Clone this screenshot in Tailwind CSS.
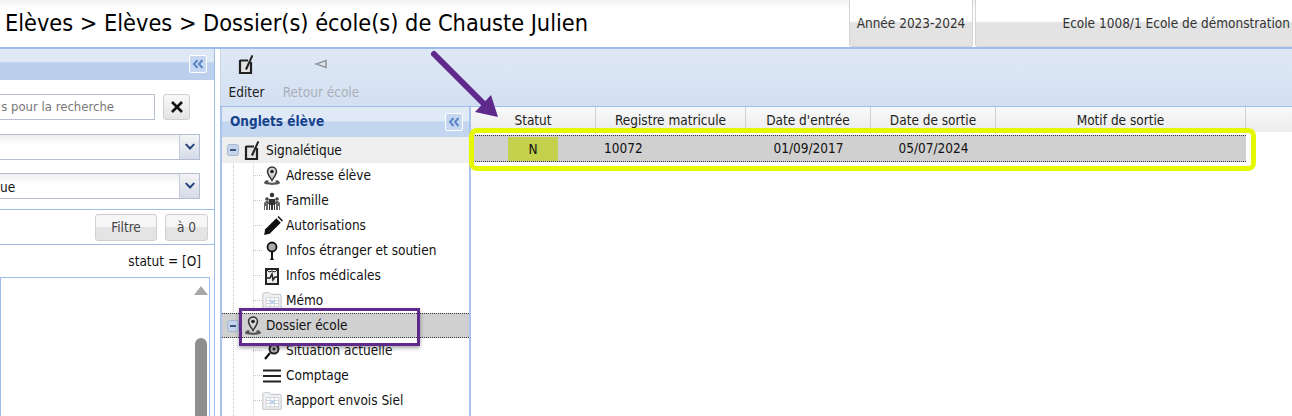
<!doctype html>
<html>
<head>
<meta charset="UTF-8">
<script src="https://cdn.jsdelivr.net/npm/@tailwindcss/browser@4"></script>
</head>
<body class="relative h-[416px] w-[1292px] overflow-hidden bg-white font-['DejaVu_Sans',sans-serif] text-[13.5px] text-[#111] [font-stretch:condensed]">
<svg class="hidden">
  <symbol id="pin" viewBox="0 0 18 20">
    <path d="M9 1a4.500 4.500 0 0 1 4.500 4.500c0 3-2.500 5.500-4.500 9-2-3.500-4.500-6-4.500-9A4.500 4.500 0 0 1 9 1z" fill="#d4d4d4" stroke="#333" stroke-width="1.500"/>
    <circle cx="9" cy="5.500" r="1.800" fill="#222"/>
    <path d="M4 14c-2 1-3 2-3 3 1 2.500 15 2.500 16 0 0-1-1-2-3-3l-2 1 1 1c-2 1-6 1-8 0l1-1z" fill="#555"/>
  </symbol>
  <symbol id="edit" viewBox="0 0 18 20">
    <path d="M2 6.500h8M2 6v13h11V8" fill="#e4e4e4" stroke="#222" stroke-width="2.200"/>
    <path d="M7 15l6.500-14 1.800 .8L9 16z" fill="#222"/>
  </symbol>
  <symbol id="sheet" viewBox="0 0 24 24">
    <path d="M1 4q0-2 2-2h6l2 2h10q2 0 2 2v16H1z" fill="#eef0f2" stroke="#bcbcbc"/>
    <path d="M5 8h15v11H5z" fill="#fff" stroke="#c9cdd2"/>
    <path d="M5 11.500h15M5 15h15M10 8v11M15 8v11" stroke="#c9cdd2"/>
    <path d="M10 11.500h5V15h-5z" fill="#bcd3f2"/>
  </symbol>
  <symbol id="chev" viewBox="0 0 12 10"><path d="M1 1.500l1.500-1L6 4l3.500-3.500 1.500 1L6 7z" fill="#1f3f7a" transform="translate(0 1)"/></symbol>
  <symbol id="dbl" viewBox="0 0 12 10"><path d="M5.500 1L2 5l3.500 4M10.500 1L7 5l3.500 4" fill="none" stroke="#5b86c4" stroke-width="2"/></symbol>
  <symbol id="minus" viewBox="0 0 12 12"><rect x=".5" y=".5" width="11" height="11" rx="2" fill="#c6d4ea" stroke="#a3b6d2"/><path d="M3 6h6" stroke="#3a5686" stroke-width="2"/></symbol>
</svg>

<!-- top bar -->
<header class="flex h-[47px] items-stretch justify-between bg-gradient-to-b from-[#f2f2f2] to-white to-20%">
  <h1 class="flex items-center pb-[1px] pl-[5px] text-[23.3px] whitespace-nowrap text-black">Elèves &gt; Elèves &gt; Dossier(s) école(s) de Chauste Julien</h1>
  <div class="flex gap-[2px]">
    <div class="flex w-[124px] items-center justify-center rounded-b-[3px] border-x border-b border-[#d4d4d4] bg-gradient-to-b from-white from-45% to-[#e3e3e3] to-50% text-[#333]">Année 2023-2024</div>
    <div class="flex w-[317px] items-center justify-end rounded-bl-[3px] border-b border-l border-[#d4d4d4] bg-gradient-to-b from-white from-45% to-[#e3e3e3] to-50% pr-[2px] text-[#333]">Ecole 1008/1 Ecole de démonstration</div>
  </div>
</header>
<div class="h-[2px] bg-[#9dbdea]"></div>

<main class="flex h-[367px]">
  <!-- search panel -->
  <aside class="flex w-[215px] shrink-0 flex-col border-r border-[#9dbdea]">
    <div class="flex h-[31px] shrink-0 items-start justify-end bg-gradient-to-b from-[#dfe9f6] from-40% to-[#bcd0ee] to-45% pt-[6px] pr-[7px]">
      <button class="flex h-[18px] w-[18px] items-center justify-center rounded-[2px] border border-white bg-[#c6d8f1]"><svg class="h-[10px] w-[12px]"><use href="#dbl"/></svg></button>
    </div>
    <div class="mt-[14px] flex h-[26px] items-stretch gap-[8px]">
      <input class="w-[155px] border border-l-0 border-[#b5bdd2] bg-white pr-[40px] text-right text-[13px] text-[#777] placeholder:text-[#777]" placeholder="s pour la recherche">
      <button class="flex w-[27px] items-center justify-center rounded-[3px] border border-[#d0d0d0] bg-gradient-to-b from-[#f8f8f8] to-[#e4e4e4]"><svg viewBox="0 0 14 14" class="h-[14px] w-[14px]"><path d="M2 2l10 10M12 2L2 12" stroke="#111" stroke-width="2.600"/></svg></button>
    </div>
    <div class="mt-[14px] flex h-[26px] w-[200px] border border-l-0 border-[#b5bdd2] bg-gradient-to-b from-[#eee] to-white to-40%">
      <span class="flex-1"></span>
      <span class="flex w-[20px] items-center justify-center border-l border-[#c8cddc] bg-gradient-to-b from-[#f4f4f4] to-[#d4dbe8]"><svg class="h-[10px] w-[12px]"><use href="#chev"/></svg></span>
    </div>
    <div class="mt-[13px] flex h-[26px] w-[200px] border border-l-0 border-[#b5bdd2] bg-gradient-to-b from-[#eee] to-white to-40%">
      <span class="flex-1 leading-[26px]">ue</span>
      <span class="flex w-[20px] items-center justify-center border-l border-[#c8cddc] bg-gradient-to-b from-[#f4f4f4] to-[#d4dbe8]"><svg class="h-[10px] w-[12px]"><use href="#chev"/></svg></span>
    </div>
    <div class="mt-[10px] flex h-[36px] w-[214px] items-center justify-end gap-[8px] border-y border-[#9dbdea] pr-[6px]">
      <button class="h-[27px] w-[62px] rounded-[3px] border border-[#d0d0d0] bg-gradient-to-b from-[#f6f6f6] from-50% to-[#e4e4e4] to-50% text-[#444]">Filtre</button>
      <button class="h-[27px] w-[43px] rounded-[3px] border border-[#d0d0d0] bg-gradient-to-b from-[#f6f6f6] from-50% to-[#e4e4e4] to-50% text-[#444]">à 0</button>
    </div>
    <div class="mt-[3px] pr-[13px] text-right leading-[26px]">statut = [O]</div>
    <div class="mt-[3px] flex min-h-0 w-[210px] flex-1 justify-end border-x border-t border-[#9dbdea] pt-[8px] pr-[1px]">
      <div class="flex w-[14px] flex-col items-center">
        <svg viewBox="0 0 14 9" class="h-[9px] w-[14px]"><path d="M7 0l7 9H0z" fill="#a8a8a8"/></svg>
        <div class="mt-[43px] w-[12px] flex-1 rounded-t-[6px] bg-[#8e8e8e]"></div>
      </div>
    </div>
  </aside>

  <!-- content -->
  <section class="ml-[5px] flex min-w-0 flex-1 flex-col">
    <div class="flex h-[57px] shrink-0 gap-[17px] border-l border-[#c6d6ec] bg-gradient-to-b from-[#dfe8f5] to-[#d3e0f1] pl-[7px]">
      <button class="flex w-[37px] flex-col items-center pt-[5px] leading-[20px] text-[#222]"><svg class="mb-[8px] h-[20px] w-[18px]"><use href="#edit"/></svg>Editer</button>
      <button class="flex w-[78px] flex-col items-center pt-[5px] leading-[20px] whitespace-nowrap text-[#aab0b8]"><svg viewBox="0 0 14 10" class="mt-[5px] mb-[13px] h-[10px] w-[14px]"><path d="M12 1.500v7L2 5z" fill="#dfe6ef" stroke="#8f959c" stroke-width="1.500"/></svg>Retour école</button>
    </div>
    <div class="flex min-h-0 flex-1 border-t border-[#9dbdea]">
      <!-- tree -->
      <nav class="flex w-[251px] shrink-0 flex-col border-x-2 border-[#a8c4ec]">
        <div class="flex h-[30px] shrink-0 items-center justify-between bg-gradient-to-b from-[#e0eaf7] from-45% to-[#c3d6f0] to-50% pr-[6px] pl-[8px] font-bold text-[#15428b]">
          <span class="mb-[2px]">Onglets élève</span>
          <button class="flex h-[18px] w-[18px] items-center justify-center rounded-[2px] border border-white bg-[#c6d8f1]"><svg class="h-[10px] w-[12px]"><use href="#dbl"/></svg></button>
        </div>
        <ul class="relative min-h-0 flex-1 overflow-hidden leading-[25px]">
          <div class="absolute top-[18px] bottom-0 left-[11px] border-l border-dotted border-[#c4c4c4]"></div>
          <div class="absolute top-[26px] bottom-0 left-[31px] border-l border-dotted border-[#d4d4d4]"></div>
          <li class="relative flex h-[26px] items-center bg-[#eeeeee] pl-[5px]"><svg class="h-[12px] w-[12px]"><use href="#minus"/></svg><svg class="mr-[4px] ml-[5px] h-[20px] w-[18px]"><use href="#edit"/></svg>Signalétique</li>
          <li class="relative flex h-[25px] items-center pl-[40px] before:absolute before:top-[12px] before:left-[31px] before:w-[9px] before:border-t before:border-dotted before:border-[#c4c4c4]"><span class="flex w-[24px] justify-center pr-[4px]"><svg class="h-[20px] w-[18px]"><use href="#pin"/></svg></span>Adresse élève</li>
          <li class="relative flex h-[25px] items-center pl-[40px] before:absolute before:top-[12px] before:left-[31px] before:w-[9px] before:border-t before:border-dotted before:border-[#c4c4c4]"><span class="flex w-[24px] justify-center pr-[4px]"><svg viewBox="0 0 18 18" class="h-[18px] w-[18px]"><circle cx="9" cy="3" r="2.200" fill="#333"/><circle cx="4" cy="7" r="1.800" fill="#444"/><circle cx="14" cy="7" r="1.800" fill="#444"/><path d="M6 7h6l1 5h-1v6h-1v-5h-1v5H8v-5H7v5H6v-6H5z" fill="#333"/><path d="M1 11l2-2h2v9H3v-4H2v4H1zM17 11l-2-2h-2v9h2v-4h1v4h1z" fill="#666"/></svg></span>Famille</li>
          <li class="relative flex h-[25px] items-center pl-[40px] before:absolute before:top-[12px] before:left-[31px] before:w-[9px] before:border-t before:border-dotted before:border-[#c4c4c4]"><span class="flex w-[24px] justify-center pr-[2px]"><svg viewBox="0 0 18 18" class="h-[20px] w-[20px]"><path d="M1 17l1-5L12 2l4 4L6 16z" fill="#111"/><path d="M13 1l1-1 4 4-1 1z" fill="#111"/></svg></span>Autorisations</li>
          <li class="relative flex h-[25px] items-center pl-[40px] before:absolute before:top-[12px] before:left-[31px] before:w-[9px] before:border-t before:border-dotted before:border-[#c4c4c4]"><span class="flex w-[24px] justify-center pr-[4px]"><svg viewBox="0 0 18 20" class="h-[20px] w-[18px]"><circle cx="9" cy="6" r="4.500" fill="#aaa" stroke="#111" stroke-width="1.800"/><path d="M8 10h2v7l1 2H7l1-2z" fill="#111"/></svg></span>Infos étranger et soutien</li>
          <li class="relative flex h-[25px] items-center pl-[40px] before:absolute before:top-[12px] before:left-[31px] before:w-[9px] before:border-t before:border-dotted before:border-[#c4c4c4]"><span class="flex w-[24px] justify-center pr-[4px]"><svg viewBox="0 0 18 18" class="h-[18px] w-[18px]"><path d="M3 2h12v15H3z" fill="#eee" stroke="#222" stroke-width="2"/><path d="M3 2l3 3 3-1 3 1 3-3" fill="none" stroke="#222"/><path d="M4 11h3l2-4 1 6 2-3h2" fill="none" stroke="#222" stroke-width="1.500"/></svg></span>Infos médicales</li>
          <li class="relative flex h-[25px] items-center pl-[40px] before:absolute before:top-[12px] before:left-[31px] before:w-[9px] before:border-t before:border-dotted before:border-[#c4c4c4]"><span class="flex w-[24px] justify-center pr-[4px]"><svg class="h-[20px] w-[20px]"><use href="#sheet"/></svg></span>Mémo</li>
          <li class="relative flex h-[25px] items-center border-y border-dotted border-[#333] bg-[#d0d0d0] pl-[5px]"><svg class="h-[12px] w-[12px]"><use href="#minus"/></svg><svg class="mr-[4px] ml-[5px] h-[20px] w-[18px]"><use href="#pin"/></svg>Dossier école</li>
          <li class="relative flex h-[25px] items-center pl-[40px] before:absolute before:top-[12px] before:left-[31px] before:w-[9px] before:border-t before:border-dotted before:border-[#c4c4c4]"><span class="flex w-[24px] justify-center pr-[4px]"><svg viewBox="0 0 18 18" class="h-[18px] w-[18px]"><circle cx="11" cy="7" r="4.500" fill="#bbb" stroke="#222" stroke-width="2"/><circle cx="11" cy="7" r="1.500" fill="#222"/><path d="M7 11l-5 6" stroke="#111" stroke-width="2.200"/></svg></span>Situation actuelle</li>
          <li class="relative flex h-[25px] items-center pl-[40px] before:absolute before:top-[12px] before:left-[31px] before:w-[9px] before:border-t before:border-dotted before:border-[#c4c4c4]"><span class="flex w-[24px] justify-center pr-[4px]"><svg viewBox="0 0 18 18" class="h-[18px] w-[18px]"><path d="M0 3.500h18M0 9h18M0 14.500h18" stroke="#222" stroke-width="2.200"/></svg></span>Comptage</li>
          <li class="relative flex h-[25px] items-center pl-[40px] before:absolute before:top-[12px] before:left-[31px] before:w-[9px] before:border-t before:border-dotted before:border-[#c4c4c4]"><span class="flex w-[24px] justify-center pr-[4px]"><svg class="h-[20px] w-[20px]"><use href="#sheet"/></svg></span>Rapport envois Siel</li>
          <li class="relative flex h-[25px] items-center pl-[40px]"><span class="flex w-[24px] justify-center pr-[4px]"><svg class="h-[20px] w-[20px]"><use href="#sheet"/></svg></span></li>
        </ul>
      </nav>
      <!-- grid -->
      <div class="min-w-0 flex-1">
        <div class="grid h-[25px] grid-cols-[125px_150px_125px_125px_250px_1fr] bg-gradient-to-b from-[#f9f9f9] to-[#ececec] text-center leading-[27px] text-[#222]">
          <div class="border-r border-[#d0d0d0]">Statut</div>
          <div class="border-r border-[#d0d0d0]">Registre matricule</div>
          <div class="border-r border-[#d0d0d0]">Date d'entrée</div>
          <div class="border-r border-[#d0d0d0]">Date de sortie</div>
          <div class="border-r border-[#d0d0d0]">Motif de sortie</div>
          <div></div>
        </div>
        <div class="mt-[3px] grid h-[27px] w-[775px] grid-cols-[125px_150px_125px_125px_250px] items-center border-y border-dotted border-[#333] bg-[#d0d0d0] leading-[25px]">
          <div class="flex justify-center"><span class="ml-[-1px] h-[24px] w-[50px] bg-[#c5d04c] text-center">N</span></div>
          <div class="pl-[8px]">10072</div>
          <div class="text-center">01/09/2017</div>
          <div class="text-center">05/07/2024</div>
          <div></div>
        </div>
      </div>
    </div>
  </section>
</main>

<!-- annotations drawn over the screenshot -->
<div class="absolute top-[128px] left-[469px] h-[43px] w-[787px] rounded-[8px] border-[5px] border-[#e6f800]"></div>
<div class="absolute top-[308px] left-[239px] h-[38px] w-[181px] border-[3px] border-[#5f2a8c] shadow-[0_2px_4px_rgba(0,0,0,0.35)]"></div>
<svg class="absolute top-[48px] left-[428px] h-[72px] w-[72px]" viewBox="0 0 72 72"><path d="M6 6l50 50" stroke="#5f2a8c" stroke-width="6" stroke-linecap="round"/><path d="M70 69L47 64l16-17z" fill="#5f2a8c"/></svg>
</body>
</html>
